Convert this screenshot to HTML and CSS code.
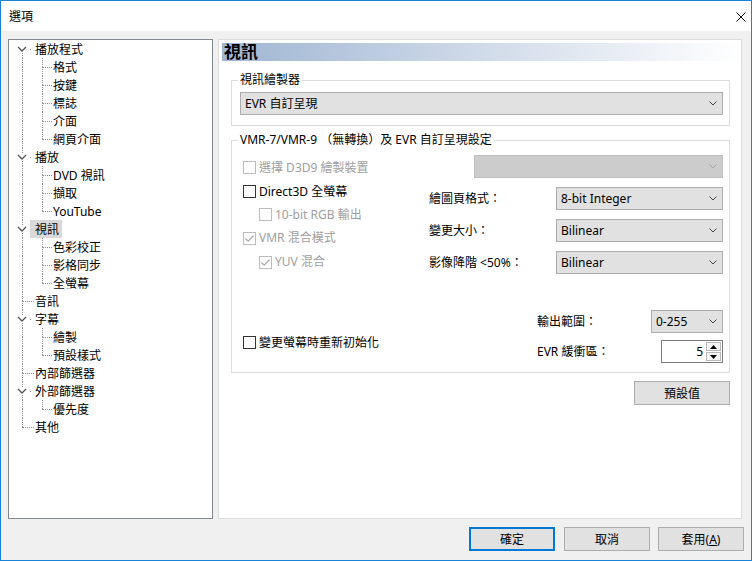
FILE: index.html
```html
<!DOCTYPE html>
<html lang="zh-Hant">
<head>
<meta charset="utf-8">
<title>選項</title>
<link rel="stylesheet" href="styles.css">
</head>
<body>
<div class="win">
  <div class="titlebar">
    <span class="title">選項</span>
    <svg class="close" width="10" height="10" viewBox="0 0 10 10"><path d="M0.5 0.5L9.5 9.5M9.5 0.5L0.5 9.5" stroke="#000" stroke-width="1" fill="none"/></svg>
  </div>
  <div class="body">
    <div class="main">
      <div class="tree">
        <div class="node"><i class="gd c0"><b class="d"></b><b class="dot"></b><svg class="chev" viewBox="0 0 10 8"><polyline points="1,2 5,6 9,2" /></svg></i><span class="t">播放程式</span></div>
        <div class="node"><i class="gd cp"><b class="u"></b><b class="d"></b></i><i class="gd c1"><b class="u"></b><b class="d h"></b></i><span class="t">格式</span></div>
        <div class="node"><i class="gd cp"><b class="u"></b><b class="d"></b></i><i class="gd c1"><b class="u"></b><b class="d h"></b></i><span class="t">按鍵</span></div>
        <div class="node"><i class="gd cp"><b class="u"></b><b class="d"></b></i><i class="gd c1"><b class="u"></b><b class="d h"></b></i><span class="t">標誌</span></div>
        <div class="node"><i class="gd cp"><b class="u"></b><b class="d"></b></i><i class="gd c1"><b class="u"></b><b class="d h"></b></i><span class="t">介面</span></div>
        <div class="node"><i class="gd cp"><b class="u"></b><b class="d"></b></i><i class="gd c1"><b class="u"></b><b class="h"></b></i><span class="t">網頁介面</span></div>
        <div class="node"><i class="gd c0"><b class="u"></b><b class="d"></b><b class="dot"></b><svg class="chev" viewBox="0 0 10 8"><polyline points="1,2 5,6 9,2" /></svg></i><span class="t">播放</span></div>
        <div class="node"><i class="gd cp"><b class="u"></b><b class="d"></b></i><i class="gd c1"><b class="u"></b><b class="d h"></b></i><span class="t">DVD 視訊</span></div>
        <div class="node"><i class="gd cp"><b class="u"></b><b class="d"></b></i><i class="gd c1"><b class="u"></b><b class="d h"></b></i><span class="t">擷取</span></div>
        <div class="node"><i class="gd cp"><b class="u"></b><b class="d"></b></i><i class="gd c1"><b class="u"></b><b class="h"></b></i><span class="t">YouTube</span></div>
        <div class="node"><i class="gd c0"><b class="u"></b><b class="d"></b><b class="dot"></b><svg class="chev" viewBox="0 0 10 8"><polyline points="1,2 5,6 9,2" /></svg></i><span class="t sel">視訊</span></div>
        <div class="node"><i class="gd cp"><b class="u"></b><b class="d"></b></i><i class="gd c1"><b class="u"></b><b class="d h"></b></i><span class="t">色彩校正</span></div>
        <div class="node"><i class="gd cp"><b class="u"></b><b class="d"></b></i><i class="gd c1"><b class="u"></b><b class="d h"></b></i><span class="t">影格同步</span></div>
        <div class="node"><i class="gd cp"><b class="u"></b><b class="d"></b></i><i class="gd c1"><b class="u"></b><b class="h"></b></i><span class="t">全螢幕</span></div>
        <div class="node"><i class="gd c0"><b class="u"></b><b class="d h"></b></i><span class="t">音訊</span></div>
        <div class="node"><i class="gd c0"><b class="u"></b><b class="d"></b><b class="dot"></b><svg class="chev" viewBox="0 0 10 8"><polyline points="1,2 5,6 9,2" /></svg></i><span class="t">字幕</span></div>
        <div class="node"><i class="gd cp"><b class="u"></b><b class="d"></b></i><i class="gd c1"><b class="u"></b><b class="d h"></b></i><span class="t">繪製</span></div>
        <div class="node"><i class="gd cp"><b class="u"></b><b class="d"></b></i><i class="gd c1"><b class="u"></b><b class="h"></b></i><span class="t">預設樣式</span></div>
        <div class="node"><i class="gd c0"><b class="u"></b><b class="d h"></b></i><span class="t">內部篩選器</span></div>
        <div class="node"><i class="gd c0"><b class="u"></b><b class="d"></b><b class="dot"></b><svg class="chev" viewBox="0 0 10 8"><polyline points="1,2 5,6 9,2" /></svg></i><span class="t">外部篩選器</span></div>
        <div class="node"><i class="gd cp"><b class="u"></b><b class="d"></b></i><i class="gd c1"><b class="u"></b><b class="h"></b></i><span class="t">優先度</span></div>
        <div class="node"><i class="gd c0"><b class="u"></b><b class="h"></b></i><span class="t">其他</span></div>
      </div>

      <div class="panel">
        <div class="hdr">視訊</div>

        <fieldset class="grp g1">
          <legend>視訊繪製器</legend>
          <div class="g1c">
            <div class="combo"><span>EVR 自訂呈現</span><svg class="cv" viewBox="0 0 8 5"><polyline points="0.5,0.5 4,4 7.5,0.5"/></svg></div>
          </div>
        </fieldset>

        <fieldset class="grp g2">
          <legend>VMR-7/VMR-9 （無轉換）及 EVR 自訂呈現設定</legend>
          <div class="g2c">
            <div class="r1">
              <div class="chk dis"><span class="box"></span><span>選擇 D3D9 繪製裝置</span></div>
              <div class="combo cdis w249"><span></span><svg class="cv" viewBox="0 0 8 5"><polyline points="0.5,0.5 4,4 7.5,0.5"/></svg></div>
            </div>
            <div class="split">
              <div class="lcol">
                <div class="chk"><span class="box"></span><span>Direct3D 全螢幕</span></div>
                <div class="chk dis ind"><span class="box"></span><span>10-bit RGB 輸出</span></div>
                <div class="chk dis tall"><span class="box"><svg class="tick" viewBox="0 0 11 11"><path d="M1.5 5.5L4.2 8.2L9.5 2.5"/></svg></span><span>VMR 混合模式</span></div>
                <div class="chk dis ind tall"><span class="box"><svg class="tick" viewBox="0 0 11 11"><path d="M1.5 5.5L4.2 8.2L9.5 2.5"/></svg></span><span>YUV 混合</span></div>
              </div>
              <div class="rcol">
                <div class="frow"><span>繪圖頁格式：</span><div class="combo w167"><span>8-bit Integer</span><svg class="cv" viewBox="0 0 8 5"><polyline points="0.5,0.5 4,4 7.5,0.5"/></svg></div></div>
                <div class="frow"><span>變更大小：</span><div class="combo w167"><span>Bilinear</span><svg class="cv" viewBox="0 0 8 5"><polyline points="0.5,0.5 4,4 7.5,0.5"/></svg></div></div>
                <div class="frow"><span>影像降階 &lt;50%：</span><div class="combo w167"><span>Bilinear</span><svg class="cv" viewBox="0 0 8 5"><polyline points="0.5,0.5 4,4 7.5,0.5"/></svg></div></div>
              </div>
            </div>
            <div class="lower">
              <div class="lcol2">
                <div class="chk"><span class="box"></span><span>變更螢幕時重新初始化</span></div>
              </div>
              <div class="rcol2">
                <div class="frow"><span>輸出範圍：</span><div class="combo w72"><span>0-255</span><svg class="cv" viewBox="0 0 8 5"><polyline points="0.5,0.5 4,4 7.5,0.5"/></svg></div></div>
                <div class="frow"><span>EVR 緩衝區：</span>
                  <div class="spin">
                    <span class="val">5</span>
                    <div class="arrows">
                      <span class="ab"><svg viewBox="0 0 7 4"><polygon points="0,4 3.5,0 7,4"/></svg></span>
                      <span class="ab"><svg viewBox="0 0 7 4"><polygon points="0,0 7,0 3.5,4"/></svg></span>
                    </div>
                  </div>
                </div>
              </div>
            </div>
          </div>
        </fieldset>

        <div class="defrow"><button class="btn wdef">預設值</button></div>
      </div>
    </div>

    <div class="btns">
      <button class="btn w86 focus">確定</button>
      <button class="btn w86">取消</button>
      <button class="btn w86 last">套用(<u>A</u>)</button>
    </div>
  </div>
</div>
</body>
</html>
```

FILE: styles.css
```css
* { box-sizing: border-box; }
html, body { margin: 0; padding: 0; }
body {
  font-family: "Noto Sans", "Noto Sans CJK TC", sans-serif;
  font-size: 12px;
  line-height: 16px;
  color: #000;
  background: #fff;
}
.win {
  width: 752px;
  height: 561px;
  border: 1px solid #1883d7;
  background: #f0f0f0;
  display: flex;
  flex-direction: column;
}
.titlebar {
  height: 30px;
  flex: none;
  background: #fff;
  display: flex;
  align-items: center;
  justify-content: space-between;
  padding: 1px 5px 0 8px;
}
.close { display: block; }

.body {
  flex: 1;
  display: flex;
  flex-direction: column;
  padding: 8px 0 9px 7px;
}
.main {
  display: flex;
  gap: 5px;
  height: 480px;
  margin-right: 9px;
}

/* tree */
.tree {
  width: 205px;
  flex: none;
  background: #fff;
  border: 1px solid #828790;
}
.node {
  display: flex;
  align-items: center;
  height: 18px;
  white-space: nowrap;
}
.gd {
  display: grid;
  grid-template-rows: 9px 9px;
  height: 18px;
  flex: none;
}
.c0 { width: 26px; grid-template-columns: 13px 13px; }
.cp { width: 24px; grid-template-columns: 13px 11px; }
.c1 { width: 20px; grid-template-columns: 9px 11px; }
.u { grid-column: 2; grid-row: 1; border-left: 1px dotted #8f8f8f; }
.d { grid-column: 2; grid-row: 2; border-left: 1px dotted #8f8f8f; }
.h { grid-column: 2; grid-row: 2; border-top: 1px dotted #8f8f8f; margin-right: 1px; }
.dot {
  grid-column: 2; grid-row: 2;
  width: 1px; height: 1px;
  margin-left: 8px;
  background: #8f8f8f;
}
.chev {
  grid-column: 1 / 3; grid-row: 1 / 3;
  width: 10px; height: 8px;
  margin: 5px 0 0 8px;
  background: #fff;
  fill: none;
  stroke: #555;
  stroke-width: 1.3;
}
.t { line-height: 18px; padding-top: 1px; }
.sel {
  background: #d9d9d9;
  line-height: 17px;
  margin-left: -5px;
  padding: 1px 3px 0 5px;
}

/* panel */
.panel {
  flex: 1;
  background: #fff;
  border: 1px solid #dcdcdc;
  padding: 3px 0 0 3px;
  display: flex;
  flex-direction: column;
}
.hdr {
  height: 18px;
  flex: none;
  background: linear-gradient(to right, #a0b6d3, #ffffff);
  font-weight: bold;
  font-size: 17px;
  line-height: 18px;
  padding-left: 2px;
}
.grp {
  border: 1px solid #dcdcdc;
  margin: 0 11px 0 9px;
  padding: 0 0 0 6px;
  min-width: 0;
}
.grp legend {
  padding: 0 2px;
  line-height: 14px;
  height: 14px;
}
.g1 { margin-top: 12px; }
.g2 { margin-top: 7px; }
.g1c { padding: 5px 6px 10px 2px; }
.g2c { padding: 8px 6px 9px 5px; }

/* combo */
.combo {
  display: flex;
  align-items: center;
  justify-content: space-between;
  height: 23px;
  border: 1px solid #adadad;
  background: #e1e1e1;
  padding: 0 5px 0 4px;
}
.cv {
  width: 8px; height: 5px;
  fill: none;
  stroke: #444;
  stroke-width: 1;
  flex: none;
}
.cdis { background: #cccccc; border-color: #bfbfbf; }
.cdis .cv { stroke: #a6a6a6; }
.w249 { width: 249px; }
.w167 { width: 167px; }
.w72 { width: 72px; }

/* checkbox */
.chk {
  display: flex;
  align-items: center;
  gap: 3px;
  height: 23px;
  white-space: nowrap;
}
.chk.tall { height: 24px; }
.box {
  width: 13px; height: 13px;
  flex: none;
  border: 1px solid #333;
  background: #fff;
  display: flex;
  align-items: center;
  justify-content: center;
}
.dis { color: #a0a0a0; }
.dis .box { border-color: #bcbcbc; }
.tick {
  width: 11px; height: 11px;
  fill: none;
  stroke: #a8a8a8;
  stroke-width: 1.2;
}
.ind { margin-left: 16px; }

/* group 2 layout */
.r1 {
  display: flex;
  align-items: center;
  justify-content: space-between;
  height: 23px;
}
.r1 .chk { padding-top: 2px; }
.split { display: flex; }
.lcol { width: 186px; padding-top: 2px; }
.rcol {
  width: 294px;
  display: flex;
  flex-direction: column;
  gap: 9px;
  padding-top: 9px;
}
.frow {
  display: flex;
  align-items: center;
  justify-content: space-between;
  height: 23px;
  white-space: nowrap;
}
.lower { display: flex; margin-top: 36px; }
.lcol2 { width: 294px; padding-top: 21px; }
.rcol2 {
  width: 186px;
  display: flex;
  flex-direction: column;
  gap: 7px;
}

/* spin */
.spin {
  width: 62px;
  height: 23px;
  border: 1px solid #7a7a7a;
  background: #fff;
  display: flex;
  align-items: stretch;
}
.val {
  flex: 1;
  text-align: right;
  padding-right: 3px;
  line-height: 21px;
}
.arrows {
  width: 16px;
  display: flex;
  flex-direction: column;
  gap: 1px;
  padding: 1px 1px 1px 0;
}
.ab {
  flex: 1;
  border: 1px solid #b9b9b9;
  background: #f4f4f4;
  display: flex;
  align-items: center;
  justify-content: center;
}
.ab svg { width: 7px; height: 4px; fill: #000; }

/* buttons */
.btn {
  height: 24px;
  border: 1px solid #adadad;
  background: #e1e1e1;
  font-family: inherit;
  font-size: 12px;
  color: #000;
  padding: 0;
  margin: 0;
}
.btn.focus { border: 2px solid #0078d7; }
.defrow {
  display: flex;
  justify-content: flex-end;
  margin: 8px 11px 0 0;
}
.wdef { width: 96px; }
.btns {
  display: flex;
  justify-content: flex-end;
  gap: 9px;
  margin: 8px 7px 0 0;
}
.w86 { width: 86px; }
.btn.last { margin-left: -1px; }
```
